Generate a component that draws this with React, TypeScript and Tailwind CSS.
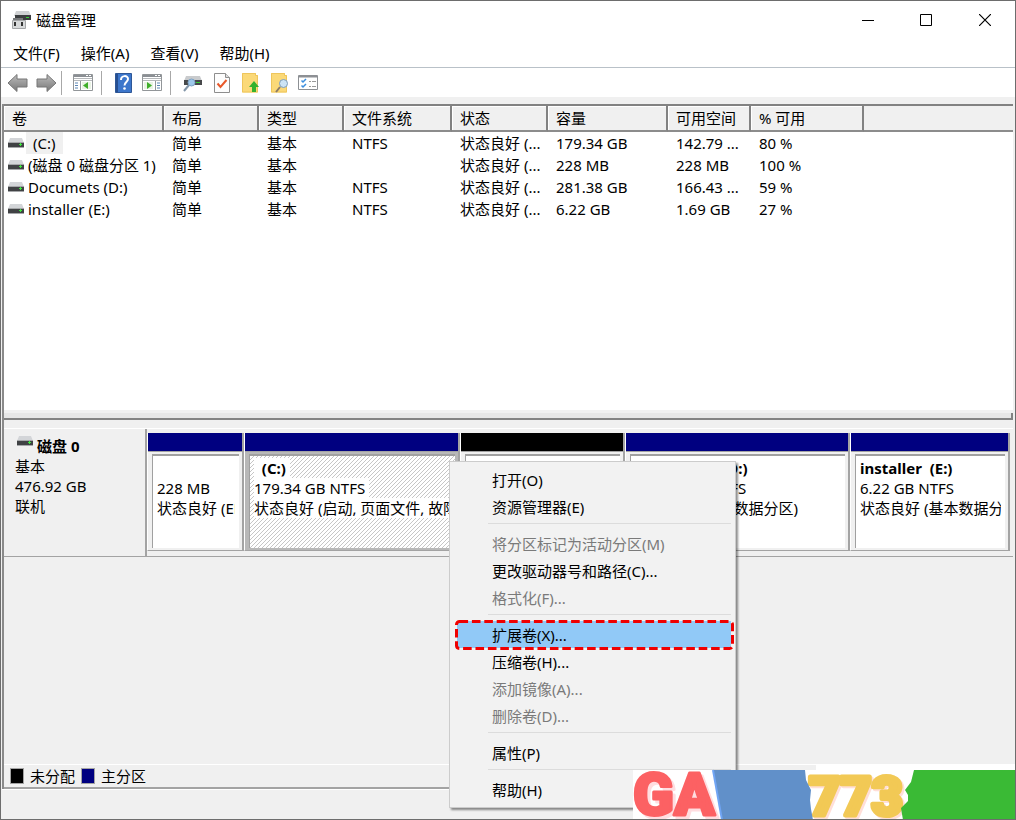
import React, { useState } from 'react';

interface Volume {
  name: string;
  layout: string;
  type: string;
  fs: string;
  status: string;
  capacity: string;
  free: string;
  percent: string;
}

interface Partition {
  id: string;
  title: string;
  size: string;
  status: string;
  unallocated?: boolean;
  selected?: boolean;
}

interface MenuEntry {
  label: string;
  disabled?: boolean;
  highlighted?: boolean;
}

const volumes: Volume[] = [
  { name: '(C:)', layout: '简单', type: '基本', fs: 'NTFS', status: '状态良好 (...', capacity: '179.34 GB', free: '142.79 ...', percent: '80 %' },
  { name: '(磁盘 0 磁盘分区 1)', layout: '简单', type: '基本', fs: '', status: '状态良好 (...', capacity: '228 MB', free: '228 MB', percent: '100 %' },
  { name: 'Documets (D:)', layout: '简单', type: '基本', fs: 'NTFS', status: '状态良好 (...', capacity: '281.38 GB', free: '166.43 ...', percent: '59 %' },
  { name: 'installer (E:)', layout: '简单', type: '基本', fs: 'NTFS', status: '状态良好 (...', capacity: '6.22 GB', free: '1.69 GB', percent: '27 %' },
];

const partitions: Partition[] = [
  { id: 'efi', title: '', size: '228 MB', status: '状态良好 (EFI 系统分区)' },
  { id: 'c', title: '\u00a0\u00a0(C:)', size: '179.34 GB NTFS', status: '状态良好 (启动, 页面文件, 故障转储, 基本数据分区)', selected: true },
  { id: 'free', title: '', size: '', status: '', unallocated: true },
  { id: 'd', title: 'Documets\u00a0\u00a0\u00a0(D:)', size: '281.38 GB NTFS', status: '状态良好 (基本数据分区)' },
  { id: 'e', title: 'installer\u00a0\u00a0(E:)', size: '6.22 GB NTFS', status: '状态良好 (基本数据分区)' },
];

const menuGroups: MenuEntry[][] = [
  [{ label: '打开(O)' }, { label: '资源管理器(E)' }],
  [{ label: '将分区标记为活动分区(M)', disabled: true }, { label: '更改驱动器号和路径(C)...' }, { label: '格式化(F)...', disabled: true }],
  [
    { label: '扩展卷(X)...', highlighted: true },
    { label: '压缩卷(H)...' },
    { label: '添加镜像(A)...', disabled: true },
    { label: '删除卷(D)...', disabled: true },
  ],
  [{ label: '属性(P)' }],
  [{ label: '帮助(H)' }],
];

const columns = ['卷', '布局', '类型', '文件系统', '状态', '容量', '可用空间', '% 可用'];

const DriveIcon = () => (
  <svg width="16" height="10" viewBox="0 0 16 10" className="shrink-0">
    <path d="M2 0h12l2 5H0z" fill="#d3d5d8" />
    <path d="M0 4h16v5H0z" fill="#404244" />
    <path d="M0 4h16v1H0zM0 9h16v1H0z" fill="#a5a7a9" />
    <path d="M11 6h3v1h-3zM12 5h1v3h-1z" fill="#3de63d" />
  </svg>
);

const AppIcon = () => (
  <svg width="21" height="20" viewBox="0 0 21 20">
    <path d="M5 1h13l2 5H3z" fill="#cfd1d3" />
    <path d="M4 5h16v5H4z" fill="#3b3d3f" />
    <path d="M15 7h3v1h-3z" fill="#35d135" />
    <path d="M2 8h10v3H2z" fill="#77797b" />
    <path d="M1.500 10.500h13v8h-13z" fill="#d7d9da" stroke="#a4a6a8" />
    <path d="M3 12h2v4H3zM10 12h2v4h-2z" fill="#333" />
  </svg>
);

const ArrowIcon = ({ forward = false }: { forward?: boolean }) => (
  <svg width="21" height="20" viewBox="0 0 21 20">
    <defs>
      <linearGradient id={forward ? 'fwd' : 'back'} x1="0" y1="0" x2="0" y2="1">
        <stop offset="0" stopColor="#bdbdbd" />
        <stop offset="1" stopColor="#777" />
      </linearGradient>
    </defs>
    {forward ? (
      <path d="M20 10 11 1.500V6H1v8h10v4.500z" fill="url(#fwd)" stroke="#777" />
    ) : (
      <path d="M1 10l9-8.500V6h10v8H10v4.500z" fill="url(#back)" stroke="#777" />
    )}
  </svg>
);

const PaneIcon = ({ right = false }: { right?: boolean }) => (
  <svg width="21" height="18" viewBox="0 0 21 18">
    <path d="M.5.5h19v16H.5z" fill="#fff" stroke="#929699" />
    <path d="M1 1h18v2H1z" fill="#8b8f94" />
    <path d="M1 4.500h18M1 6.500h18" stroke="#b5b8bb" />
    <path d="M13 1h2v1h-2zM16 1h2v1h-2z" fill="#fff" />
    {right ? (
      <>
        <path d="M13.500 7v9" stroke="#929699" />
        <path d="M2 8h9v7H2z" fill="#e9f3e4" />
        <path d="M5 8l5 3.500L5 15z" fill="#3fae2a" />
        <path d="M15 9h3M15 11.500h3M15 14h3" stroke="#5b85b5" />
      </>
    ) : (
      <>
        <path d="M7.500 7v9" stroke="#929699" />
        <path d="M9 8h9v7H9z" fill="#e9f3e4" />
        <path d="M15 8l-5 3.500 5 3.500z" fill="#3fae2a" />
        <path d="M2 9h3M2 11.500h3M2 14h3" stroke="#5b85b5" />
      </>
    )}
  </svg>
);

const HelpIcon = () => (
  <svg width="17" height="20" viewBox="0 0 17 20">
    <path d="M.5.5h16v19H.5z" fill="#3c76cb" stroke="#2e5797" />
    <path d="M1 1h2v18H1z" fill="#274f91" />
    <path d="M6 7c0-5 7-5 7-1 0 3-3.500 3-3.500 6.500" fill="none" stroke="#fff" strokeWidth="2" />
    <circle cx="9.500" cy="15.500" r="1.300" fill="#fff" />
  </svg>
);

const SearchDriveIcon = () => (
  <svg width="19" height="18" viewBox="0 0 19 18">
    <path d="M3 2h14l2 5H1z" fill="#c9cbcd" />
    <path d="M1 6h18v5H1z" fill="#47494b" />
    <path d="M13 8h4v1h-4z" fill="#35d135" />
    <path d="M6 11l-5 6" stroke="#8295a8" strokeWidth="2" />
    <circle cx="8.500" cy="8.500" r="3.500" fill="#9ec9ec" stroke="#7fa2c2" />
  </svg>
);

const CheckDocIcon = () => (
  <svg width="16" height="20" viewBox="0 0 16 20">
    <path d="M.5.5h11l4 4v15H.5z" fill="#fdfdfd" stroke="#8e8e8e" />
    <path d="M11.500.5v4h4" fill="#ddd" stroke="#8e8e8e" />
    <path d="M3.500 10.500l3 3.500 6-7" fill="none" stroke="#e8582a" strokeWidth="2" />
  </svg>
);

const FolderIcon = ({ search = false }: { search?: boolean }) => (
  <svg width="18" height="20" viewBox="0 0 18 20">
    <path d="M0 0h14v2h2v17.500H0z" fill="#fbd978" />
    <path d="M.5.5h13v2h2v16.500H.5z" fill="none" stroke="#eec55c" />
    {search ? (
      <>
        <path d="M9 14l-4 5" stroke="#8a7a68" strokeWidth="2" />
        <circle cx="12.500" cy="10.500" r="4" fill="#cde4f5" stroke="#7d9dbb" />
      </>
    ) : (
      <path d="M12 8l5 6h-3v5h-4v-5H7z" fill="#35b22d" />
    )}
  </svg>
);

const ListIcon = () => (
  <svg width="21" height="16" viewBox="0 0 21 16">
    <path d="M.5.5h19v14H.5z" fill="#fff" stroke="#8d9094" />
    <path d="M1 1h18v1.500H1z" fill="#8d9094" />
    <path d="M3.500 5.500l1.500 1.500 3-3M3.500 10.500L5 12l3-3" fill="none" stroke="#3b8ede" strokeWidth="1.500" />
    <path d="M11 6.500h2M14 6.500h4M11 11.500h2M14 11.500h4" stroke="#999" />
  </svg>
);

const ToolButton = ({ label, children }: { label: string; children: React.ReactNode }) => (
  <button aria-label={label} className="flex w-[29px] items-center justify-center">
    {children}
  </button>
);

const ToolDivider = () => <div className="h-6 w-[2px] border-l border-[#a8a8a8]" />;

const TitleBar = () => (
  <header className="flex h-[38px] items-center justify-between pl-[10px]">
    <div className="flex items-center gap-1">
      <AppIcon />
      <h1>磁盘管理</h1>
    </div>
    <div className="flex h-full">
      <button aria-label="最小化" className="flex w-[58px] items-center justify-center">
        <svg width="12" height="12" viewBox="0 0 12 12"><path d="M0 6.500h12" stroke="#000" /></svg>
      </button>
      <button aria-label="最大化" className="flex w-[58px] items-center justify-center">
        <svg width="12" height="12" viewBox="0 0 12 12"><path d="M.5.5h11v11H.5z" fill="none" stroke="#000" /></svg>
      </button>
      <button aria-label="关闭" className="flex w-[60px] items-center justify-center">
        <svg width="12" height="12" viewBox="0 0 12 12"><path d="M0 0l12 12M12 0L0 12" stroke="#000" strokeWidth="1.200" /></svg>
      </button>
    </div>
  </header>
);

const VolumeTable = () => {
  const thClass = 'h-[26px] border-r-2 border-b-2 border-r-[#828282] border-b-[#8c8c8c] pl-2 text-left font-normal shadow-[inset_1px_1px_0_#fff]';

  return (
    <table className="w-full table-fixed border-separate border-spacing-0 whitespace-nowrap">
      <colgroup>
        <col className="w-[160px]" />
        <col className="w-[95px]" />
        <col className="w-[85px]" />
        <col className="w-[108px]" />
        <col className="w-[96px]" />
        <col className="w-[120px]" />
        <col className="w-[83px]" />
        <col className="w-[113px]" />
        <col />
      </colgroup>
      <thead className="bg-[#f0f0f0]">
        <tr>
          {columns.map((column) => (
            <th key={column} className={thClass}>{column}</th>
          ))}
          <td className="border-b-2 border-[#8c8c8c]" />
        </tr>
      </thead>
      <tbody>
        {volumes.map((volume, index) => (
          <tr key={volume.name} className="h-[22px]">
            <td className="p-0 pl-1">
              <div className="flex items-center gap-[2px]">
                <DriveIcon />
                <span className={index === 0 ? 'bg-[#f0f0f0] px-[7px]' : 'px-[2px]'}>{volume.name}</span>
              </div>
            </td>
            <td className="p-0 pl-2">{volume.layout}</td>
            <td className="p-0 pl-2">{volume.type}</td>
            <td className="p-0 pl-2">{volume.fs}</td>
            <td className="p-0 pl-2">{volume.status}</td>
            <td className="p-0 pl-2">{volume.capacity}</td>
            <td className="p-0 pl-2">{volume.free}</td>
            <td className="p-0 pl-2">{volume.percent}</td>
            <td />
          </tr>
        ))}
      </tbody>
    </table>
  );
};

const PartitionBlock = ({ partition }: { partition: Partition }) => {
  const textClass = partition.selected ? 'inline-block bg-white pr-1' : '';

  return (
    <div className="flex min-w-0 flex-col border-r-2 border-b border-l border-r-[#a3a3a3] border-b-[#a3a3a3] border-l-white">
      <div className={`h-[18px] ${partition.unallocated ? 'bg-black' : 'bg-[#000080]'}`} />
      <div className={`flex flex-1 border-t border-[#a3a3a3] pt-[2px] pr-[3px] pb-[2px] pl-1 ${partition.selected ? 'bg-[#b8b8b8]' : 'bg-[#f0f0f0]'}`}>
        <div
          className={`min-w-0 flex-1 overflow-hidden border-t-2 border-l border-[#a0a0a0] pt-[2px] pr-1 pl-1 leading-5 whitespace-nowrap ${
            partition.selected ? 'bg-[linear-gradient(135deg,#fff_42%,#c6c6c6_42%,#c6c6c6_58%,#fff_58%)] bg-[length:4px_4px]' : 'bg-white'
          }`}
        >
          <div className="overflow-hidden">
            <div className="h-5 font-bold"><span className={textClass}>{partition.title}</span></div>
            <div className="h-5"><span className={textClass}>{partition.size}</span></div>
            <div className="h-5"><span className={textClass}>{partition.status}</span></div>
          </div>
        </div>
      </div>
    </div>
  );
};

const ContextMenu = () => (
  <div role="menu" className="absolute top-[460px] left-[448px] w-[287px] border border-[#ccc] bg-[#f2f2f2] pt-1 pb-1 shadow-[2px_2px_2px_#00000070]">
    {menuGroups.map((group, index) => (
      <div key={group[0].label}>
        {index > 0 && <div className="mt-[3px] mr-1 mb-[6px] ml-[38px] h-px bg-[#dcdcdc]" />}
        {group.map((entry) => (
          <div key={entry.label} className="relative pr-1 pl-[7px]">
            <button
              role="menuitem"
              disabled={entry.disabled}
              className={`block h-[27px] w-full pl-[35px] text-left ${entry.highlighted ? 'bg-[#91c9f7]' : ''} ${entry.disabled ? 'text-[#7a7a7a]' : ''}`}
            >
              {entry.label}
            </button>
            {entry.highlighted && (
              <svg width="279" height="30" viewBox="0 0 279 30" className="pointer-events-none absolute -top-px left-[5px]">
                <rect x="1.500" y="1.500" width="276" height="27" rx="3" fill="none" stroke="#f00000" strokeWidth="3" strokeDasharray="8.600 3.800" />
              </svg>
            )}
          </div>
        ))}
      </div>
    ))}
  </div>
);

const Logo = () => (
  <svg width="383" height="56" viewBox="0 0 383 56" className="absolute -right-px -bottom-px">
    <path d="M183 0h200v8H183zM0 6h383v50H0z" fill="#fff" />
    <g fontFamily="Roboto, 'Liberation Sans', sans-serif" fontWeight="900" strokeLinejoin="round">
      <text x="0" y="51" fontSize="60" fill="#fc6163" stroke="#fc6163" strokeWidth="3" className="drop-shadow-[3px_3px_0_#ffdde0]">GA</text>
      <text x="176" y="51" fontSize="54" fill="#f2c955" stroke="#f2c955" strokeWidth="5" className="drop-shadow-[2px_2px_0_#ffdfd8]">773</text>
    </g>
    <path d="M80 6h92l1 10 5 10-1 10 1 9 2 11H89z" fill="#6190c9" />
    <path d="M80 6l9 50" stroke="#70a5f4" strokeWidth="2" />
    <path d="M281 6h102v50H270l-2-12 7-7v-6l-3-5 6-8z" fill="#3aba35" />
  </svg>
);

export default function App() {
  const [menuOpen, setMenuOpen] = useState(true);

  return (
    <div className="relative flex min-h-screen flex-col overflow-hidden border border-[#6d6d6d] bg-white font-['Noto_Sans','Noto_Sans_CJK_SC',sans-serif] text-[15px] leading-[22px] text-black">
      <TitleBar />
      <nav className="flex h-[28px] items-center gap-[21px] px-3">
        <button>文件(F)</button>
        <button>操作(A)</button>
        <button>查看(V)</button>
        <button>帮助(H)</button>
      </nav>
      <div className="flex h-[30px] items-center border-t border-[#b9c1c8] pl-[2px]">
        <ToolButton label="后退"><ArrowIcon /></ToolButton>
        <ToolButton label="前进"><ArrowIcon forward /></ToolButton>
        <ToolDivider />
        <div className="flex pr-[3px] pl-[6px]"><ToolButton label="显示/隐藏控制台树"><PaneIcon /></ToolButton></div>
        <ToolDivider />
        <div className="flex pr-[3px] pl-[6px]">
          <ToolButton label="帮助"><HelpIcon /></ToolButton>
          <ToolButton label="显示/隐藏操作窗格"><PaneIcon right /></ToolButton>
        </div>
        <ToolDivider />
        <div className="flex pr-[3px] pl-[6px]">
          <ToolButton label="重新扫描磁盘"><SearchDriveIcon /></ToolButton>
          <ToolButton label="属性"><CheckDocIcon /></ToolButton>
          <ToolButton label="打开"><FolderIcon /></ToolButton>
          <ToolButton label="浏览"><FolderIcon search /></ToolButton>
          <ToolButton label="设置"><ListIcon /></ToolButton>
        </div>
      </div>

      <main className="flex flex-1 flex-col bg-[#f0f0f0] pt-[7px] pr-[2px] pl-px">
        <div className="flex flex-1 flex-col border-l-2 border-[#8a8a8a]">
          <section className="h-[306px] border-t-2 border-[#828282] bg-white">
            <VolumeTable />
          </section>
          <div className="mt-[3px] h-[7px] border-r-2 border-b-2 border-[#828282] bg-[#e6e6e6]" />

          <section className="mt-2 flex h-[129px] border-t border-b border-t-white border-b-[#a3a3a3]" onContextMenu={() => setMenuOpen(!menuOpen)}>
            <div className="w-[143px] shrink-0 border-r-2 border-[#a3a3a3] pt-[7px] pl-[11px] leading-5">
              <h2 className="flex items-start gap-1 pl-[2px] font-bold"><DriveIcon />磁盘 0</h2>
              <p>基本</p>
              <p>476.92 GB</p>
              <p>联机</p>
            </div>
            <div className="grid flex-1 grid-cols-[97fr_216fr_165fr_225fr_160fr] pt-1 pr-[3px] pb-[5px]">
              {partitions.map((partition) => (
                <PartitionBlock key={partition.id} partition={partition} />
              ))}
            </div>
          </section>

          <div className="flex-1" />
          <footer className="flex h-[25px] items-center border-t border-b-2 border-t-white border-b-[#a3a3a3] pl-[6px]">
            <span className="mr-[6px] h-4 w-[14px] border border-[#a3a3a3] bg-black" />
            未分配
            <span className="mr-[6px] ml-[6px] h-4 w-[14px] border border-[#a3a3a3] bg-[#000080]" />
            主分区
          </footer>
        </div>
        <div className="h-[30px] border-t border-white" />
      </main>

      {menuOpen && <ContextMenu />}
      <Logo />
    </div>
  );
}
